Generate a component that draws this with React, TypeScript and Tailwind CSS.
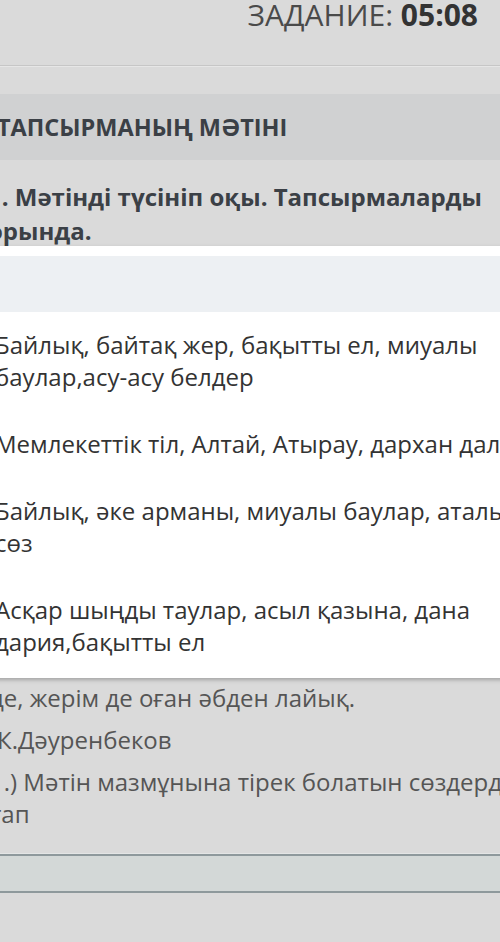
import React from "react";

const options = [
  "Байлық, байтақ жер, бақытты ел, миуалы баулар,асу-асу белдер",
  "Мемлекеттік тіл, Алтай, Атырау, дархан дала",
  "Байлық, әке арманы, миуалы баулар, аталы сөз",
  "Асқар шыңды таулар, асыл қазына, дана дария,бақытты ел",
];

export default function App() {
  return (
    <div className="relative h-[942px] w-[500px] overflow-hidden bg-[#dadada] font-['Open_Sans',sans-serif]">
      {/* timer */}
      <header className="flex h-[66px] justify-end border-b border-[#c6c6c6] pr-[22px]">
        <p className="whitespace-nowrap text-[30px] leading-[30px] text-[#4a4a4a]">
          ЗАДАНИЕ: <span className="font-bold text-[#333]">05:08</span>
        </p>
      </header>
      <div className="h-[28px] border-t border-[#e6e6e6]" />

      {/* section title */}
      <div className="flex h-[66px] items-center bg-[#d0d1d2]">
        <h2 className="-ml-[3px] whitespace-nowrap text-[23.5px] font-bold leading-[32px] text-[#3b4046]">
          ТАПСЫРМАНЫҢ МӘТІНІ
        </h2>
      </div>

      {/* task body */}
      <div className="-ml-[12px] flex w-[532px] flex-col gap-[10px] pt-[20px]">
        <p className="text-[24px] font-bold leading-[34px] text-[#3b4046]">
          1. Мәтінді түсініп оқы. Тапсырмаларды орында.
        </p>
        {/* passage hidden under the dropdown */}
        <div className="h-[414px]" />
        <p className="ml-[2px] whitespace-nowrap text-[24px] leading-[32px] text-[#555]">
          де, жерім де оған әбден лайық.
        </p>
        <p className="ml-[9px] text-[24px] leading-[32px] text-[#555]">
          К.Дәуренбеков
        </p>
        <p className="ml-[2px] w-[540px] text-[24px] leading-[32px] text-[#555]">
          1.) Мәтін мазмұнына тірек болатын сөздерді тап
        </p>
      </div>

      <div className="mt-[23px] h-px bg-[#e3e5e5]" />
      <div className="h-[2px] bg-[#8e999c]" />
      <div className="h-[35px] bg-[#d3d8d7]" />
      <div className="h-[2px] bg-[#8e999c]" />

      {/* dropdown with answers */}
      <div className="absolute left-[-20px] top-[246px] w-[580px] bg-white pt-[10px] shadow-[0_2px_4px_rgba(0,0,0,0.25)]">
        <div className="h-[56px] bg-[#edf0f3]" />
        <ul className="pb-[2px]">
          {options.map((o) => (
            <li
              key={o}
              className="w-[560px] pb-[18px] pl-[15px] pt-[17px] text-[24px] leading-[32px] text-[#333]"
            >
              {o}
            </li>
          ))}
        </ul>
      </div>
    </div>
  );
}
